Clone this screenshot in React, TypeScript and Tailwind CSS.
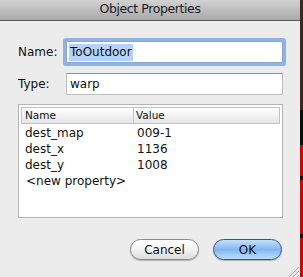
import React from "react";

const font = { fontFamily: '"DejaVu Sans", "Liberation Sans", sans-serif' };

const rows = [
  ["dest_map", "009-1"],
  ["dest_x", "1136"],
  ["dest_y", "1008"],
];

function ResizeGrip() {
  return (
    <svg width="11" height="11" viewBox="0 0 11 11" className="self-end mr-[1px]">
      <path d="M11 1 L1 11 M11 5 L5 11 M11 9 L9 11" stroke="#9a9a9a" strokeWidth="1" />
      <path d="M11 2 L2 11 M11 6 L6 11 M11 10 L10 11" stroke="#ffffff" strokeWidth="1" />
    </svg>
  );
}

export default function App() {
  return (
    <div className="flex w-[303px] h-[277px] overflow-hidden text-[#111]" style={font}>
      <div className="flex flex-col w-[300px] h-full bg-[#ececec]">
        {/* title bar */}
        <div className="h-[21px] shrink-0 flex items-center justify-center bg-gradient-to-b from-[#d2d2d2] to-[#a9a9a9] border-b border-[#585858]">
          <span className="text-[12.5px] tracking-[-0.4px] text-[#1c1c1c] pb-[1px]">Object Properties</span>
        </div>

        <div className="flex flex-col pl-[18px] pr-[17px] pt-[20px]">
          <div className="flex items-center h-[22px]">
            <span className="w-[48px] text-[12px]">Name:</span>
            <div className="flex-1 h-[22px] bg-white border border-[#8aa8d4] ring-[3px] ring-[#8db2e3] rounded-[1px] flex items-center pl-[2px]">
              <span className="text-[12px] bg-[#b3d3fb] px-[1px] leading-[17px]">ToOutdoor</span>
            </div>
          </div>

          <div className="flex items-center h-[22px] mt-[10px]">
            <span className="w-[48px] text-[12px]">Type:</span>
            <div className="flex-1 h-[22px] bg-white border border-[#bdbdbd] border-t-[#8e8e8e] flex items-center pl-[3px]">
              <span className="text-[12px]">warp</span>
            </div>
          </div>

          <div className="mt-[9px] h-[114px] border border-[#b4b4b4] bg-white p-[2px] flex flex-col">
            <div className="flex h-[17px] border border-[#c2c2c2] bg-gradient-to-b from-white to-[#e6e6e6] text-[10.5px]">
              <div className="w-[112px] border-r border-[#c2c2c2] pl-[3px] leading-[15px]">Name</div>
              <div className="flex-1 pl-[2px] leading-[15px]">Value</div>
            </div>
            <div className="flex flex-col text-[12px] mt-[1px]">
              {rows.map(([k, v]) => (
                <div key={k} className="flex h-[16px] items-center">
                  <span className="w-[113px] pl-[4px]">{k}</span>
                  <span className="pl-[3px]">{v}</span>
                </div>
              ))}
              <div className="flex h-[16px] items-center pl-[5px]">&lt;new property&gt;</div>
            </div>
          </div>

          <div className="flex justify-end gap-[14px] mt-[21px] pr-[1px]">
            <button className="w-[69px] h-[21px] rounded-full border border-[#8a8a8a] bg-gradient-to-b from-white via-[#f3f3f3] to-[#dcdcdc] text-[12px] shadow-[0_1px_1px_rgba(0,0,0,0.25)]">
              Cancel
            </button>
            <button className="w-[69px] h-[21px] rounded-full border border-[#3d4f8f] bg-gradient-to-b from-[#c6e0fa] via-[#82b7ee] to-[#b8e0fa] text-[12px] shadow-[0_1px_1px_rgba(0,0,0,0.25)]">
              OK
            </button>
          </div>
        </div>

        <div className="flex-1 flex items-end justify-end">
          <ResizeGrip />
        </div>
      </div>

      {/* sliver of the window behind */}
      <div className="w-[3px] h-full flex flex-col">
        <div className="h-[110px] bg-[#3b2a22]" />
        <div className="h-[35px] bg-[#0c0c0c]" />
        <div className="h-[31px] bg-[#d40000]" />
        <div className="h-[4px] bg-[#111]" />
        <div className="h-[54px] bg-[#d40000]" />
        <div className="h-[4px] bg-[#111]" />
        <div className="flex-1 bg-[#d40000]" />
      </div>
    </div>
  );
}
